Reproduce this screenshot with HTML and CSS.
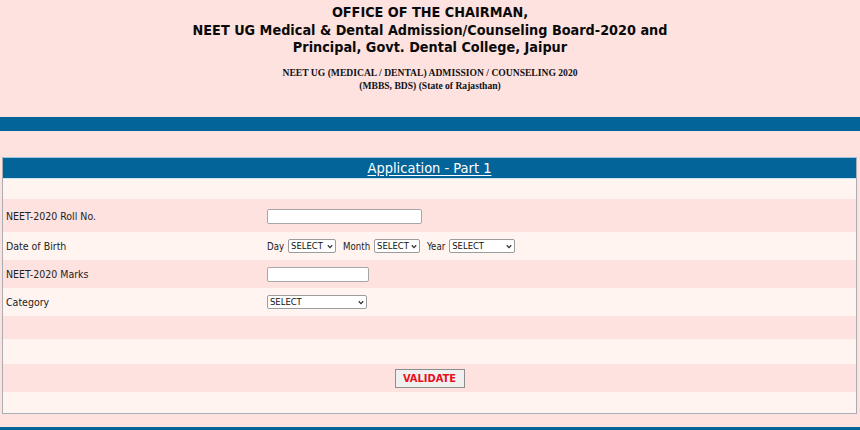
FILE: index.html
```html
<!DOCTYPE html>
<html>
<head>
<meta charset="utf-8">
<link rel="stylesheet" href="styles.css">
</head>
<body>
<header class="head">
  <h1 class="title">OFFICE OF THE CHAIRMAN,<br>NEET UG Medical &amp; Dental Admission/Counseling Board-2020 and<br>Principal, Govt. Dental College, Jaipur</h1>
  <p class="sub">NEET UG (MEDICAL / DENTAL) ADMISSION / COUNSELING 2020<br>(MBBS, BDS) (State of Rajasthan)</p>
</header>
<div class="bar"></div>
<div class="box">
  <div class="box-head"><a href="#" class="box-title">Application - Part 1</a></div>
  <div class="row light r-top"></div>
  <div class="row pink r-roll">
    <span class="label">NEET-2020 Roll No.</span>
    <span class="ctrl"><input class="txt txt-roll" type="text"></span>
  </div>
  <div class="row light r-mid">
    <span class="label">Date of Birth</span>
    <span class="ctrl dob">
      <span class="pre">Day</span>
      <span class="sel sel-day"><select><option>SELECT</option></select><svg class="chev" viewBox="0 0 6 5" width="6" height="5"><path d="M0.8 1.2 L3 3.6 L5.2 1.2" fill="none" stroke="#333" stroke-width="1.3"/></svg></span>
      <span class="pre">Month</span>
      <span class="sel sel-month"><select><option>SELECT</option></select><svg class="chev" viewBox="0 0 6 5" width="6" height="5"><path d="M0.8 1.2 L3 3.6 L5.2 1.2" fill="none" stroke="#333" stroke-width="1.3"/></svg></span>
      <span class="pre">Year</span>
      <span class="sel sel-year"><select><option>SELECT</option></select><svg class="chev" viewBox="0 0 6 5" width="6" height="5"><path d="M0.8 1.2 L3 3.6 L5.2 1.2" fill="none" stroke="#333" stroke-width="1.3"/></svg></span>
    </span>
  </div>
  <div class="row pink r-mid">
    <span class="label">NEET-2020 Marks</span>
    <span class="ctrl"><input class="txt txt-marks" type="text"></span>
  </div>
  <div class="row light r-mid">
    <span class="label">Category</span>
    <span class="ctrl"><span class="sel sel-cat"><select><option>SELECT</option></select><svg class="chev" viewBox="0 0 6 5" width="6" height="5"><path d="M0.8 1.2 L3 3.6 L5.2 1.2" fill="none" stroke="#333" stroke-width="1.3"/></svg></span></span>
  </div>
  <div class="row pink r-empty"></div>
  <div class="row light r-empty2"></div>
  <div class="row pink r-btn"><button class="validate" type="button">VALIDATE</button></div>
  <div class="row light r-end"></div>
</div>
<div class="bar bar-bottom"></div>
</body>
</html>
```
FILE: styles.css
```css
* { box-sizing: border-box; }
html, body { margin: 0; padding: 0; }
body {
  background: #fee2e0;
  width: 860px;
  height: 430px;
  overflow: hidden;
  font-family: "DejaVu Sans Condensed", "DejaVu Sans", Verdana, sans-serif;
  color: #111;
}
.head {
  text-align: center;
  padding-top: 4px;
  height: 117px;
}
.title {
  margin: 0;
  font-size: 14.3px;
  line-height: 17.5px;
  font-weight: bold;
  color: #0a0a0a;
}
.sub {
  margin: 9px 0 0;
  font-family: "Liberation Serif", "Times New Roman", serif;
  font-weight: bold;
  font-size: 9.6px;
  line-height: 13px;
  color: #111;
}
.bar {
  height: 14px;
  background: #03649a;
}
.box {
  margin: 26px 3px 0 2px;
  border: 1px solid #a9aeb4;
  border-top-color: #9cc3dc;
  background: #fff4ef;
}
.box-head {
  height: 21px;
  background: #03649a;
  display: flex;
  align-items: center;
  justify-content: center;
  border-bottom: 1px solid #cfe3f0;
}
.box-title {
  color: #fff;
  font-size: 14.5px;
  text-decoration: underline;
  text-underline-offset: 2px;
}
.row {
  display: flex;
  align-items: center;
  font-size: 9.6px;
  color: #222;
}
.light { background: #fff4ef; }
.pink { background: #fee2e0; }
.r-top { height: 20px; }
.r-roll { height: 33px; padding-top: 1px; }
.r-mid { height: 28px; }
.r-empty { height: 23px; }
.r-empty2 { height: 25px; }
.r-btn { height: 28px; justify-content: center; }
.r-end { height: 21px; }
.label {
  width: 264px;
  padding-left: 3px;
  font-size: 10.5px;
}
.ctrl {
  display: flex;
  align-items: center;
}
.txt {
  height: 15px;
  border: 1px solid #a7a7a7;
  border-radius: 2px;
  background: #fff;
  padding: 0;
  margin: 0;
}
.txt-roll { width: 155px; }
.txt-marks { width: 102px; }
.pre {
  font-size: 9.6px;
  margin-right: 4px;
}
.sel {
  position: relative;
  display: inline-block;
  margin-right: 7px;
}
.sel select {
  appearance: none;
  -webkit-appearance: none;
  display: block;
  height: 14px;
  border: 1px solid #9c9c9c;
  border-radius: 2px;
  background: #fff;
  font-family: "DejaVu Sans Condensed", "DejaVu Sans", Verdana, sans-serif;
  font-size: 9.4px;
  color: #111;
  padding: 0 0 0 2px;
  margin: 0;
  line-height: 12px;
}
.chev {
  position: absolute;
  right: 3px;
  top: 5px;
}
.sel-day select { width: 48px; }
.sel-month select { width: 46px; }
.sel-year select { width: 66px; }
.sel-cat select { width: 100px; }
.validate {
  margin-top: 1px;
  width: 70px;
  height: 19px;
  padding: 0;
  border: 1px solid #8d8d8d;
  border-radius: 0;
  background: #f0f0f0;
  color: #e8101c;
  font-family: "DejaVu Sans Condensed", "DejaVu Sans", Verdana, sans-serif;
  font-weight: bold;
  font-size: 11px;
}
.bar-bottom {
  margin-top: 13px;
}
```
